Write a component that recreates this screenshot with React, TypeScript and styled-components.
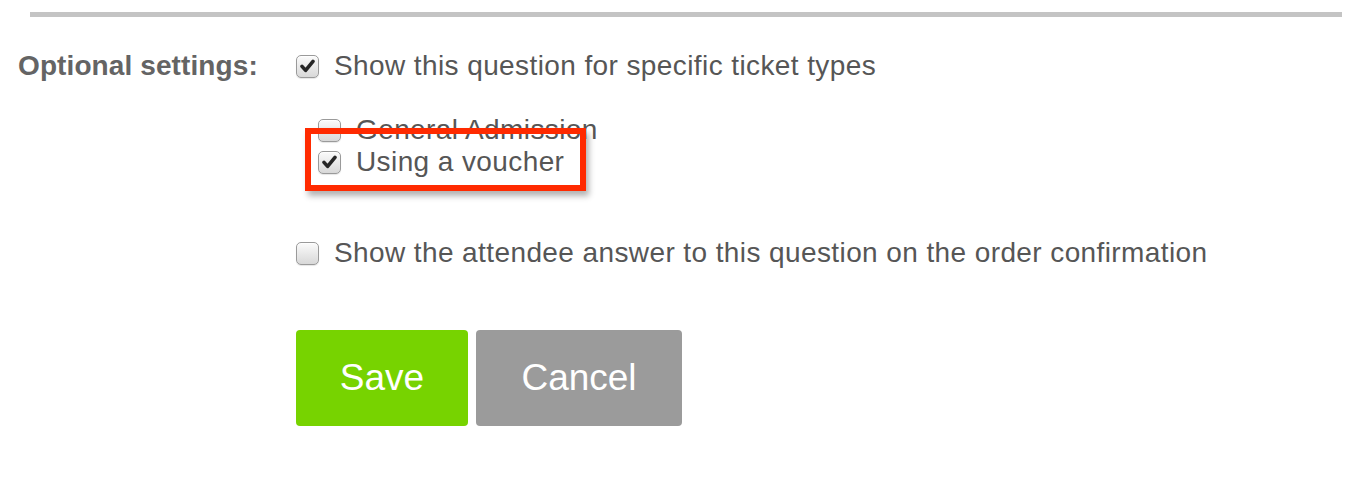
import React from 'react';
import styled, { createGlobalStyle } from 'styled-components';

const GlobalStyle = createGlobalStyle`
  html, body {
    margin: 0;
    padding: 0;
    background: #ffffff;
  }
  body {
    font-family: 'Liberation Sans', Arial, sans-serif;
  }
`;

const Page = styled.div`
  width: 1360px;
  height: 488px;
  padding-top: 12px;
  box-sizing: border-box;
`;

const Rule = styled.div`
  margin-left: 30px;
  width: 1312px;
  height: 5px;
  background: #c4c4c4;
`;

const FormRow = styled.div`
  display: flex;
  margin-top: 33px;
`;

const Label = styled.div`
  width: 278px;
  padding-left: 18px;
  font-size: 28px;
  line-height: 32px;
  font-weight: bold;
  letter-spacing: 0.1px;
  color: #646464;
`;

const Options = styled.div`
  display: flex;
  flex-direction: column;
`;

const Option = styled.label<{ $indent?: boolean }>`
  position: relative;
  display: flex;
  align-items: center;
  height: 32px;
  margin-left: ${p => (p.$indent ? '22px' : '0')};
  font-size: 28px;
  letter-spacing: 0.4px;
  color: #565656;
`;

const SubList = styled.div`
  display: flex;
  flex-direction: column;
  margin: 32px 0 59px;
`;

const Box = styled.span`
  display: inline-flex;
  align-items: center;
  justify-content: center;
  flex-shrink: 0;
  width: 23px;
  height: 23px;
  box-sizing: border-box;
  margin-right: 15px;
  border: 1px solid #9a9a9a;
  border-radius: 5px;
  background: linear-gradient(#fbfbfb, #d8d8d8);
  box-shadow: inset 0 1px 1px rgba(255, 255, 255, 0.9), 0 1px 1px rgba(0, 0, 0, 0.1);
`;

const Highlight = styled.span`
  position: absolute;
  left: -13px;
  top: -18px;
  width: 281px;
  height: 63px;
  box-sizing: border-box;
  border: 6px solid #ff2a00;
  box-shadow: 3px 5px 6px rgba(0, 0, 0, 0.3);
  pointer-events: none;
`;

const Buttons = styled.div`
  display: flex;
  gap: 8px;
  margin-top: 61px;
`;

const Button = styled.button<{ $tone: 'save' | 'cancel'; $width: number }>`
  width: ${p => p.$width}px;
  height: 96px;
  border: none;
  border-radius: 4px;
  background: ${p => (p.$tone === 'save' ? '#77d300' : '#9b9b9b')};
  color: #ffffff;
  font-family: 'Liberation Sans', Arial, sans-serif;
  font-size: 37px;
  padding: 0;
  cursor: pointer;
`;

const Check = ({ checked }: { checked?: boolean }) => (
  <Box>
    {checked && (
      <svg width="15" height="14" viewBox="0 0 15 14">
        <path
          d="M2 7.4 L5.6 11.4 L13 2.4"
          fill="none"
          stroke="#262626"
          strokeWidth="3.6"
          strokeLinecap="round"
          strokeLinejoin="round"
        />
      </svg>
    )}
  </Box>
);

const App = () => (
  <Page>
    <GlobalStyle />
    <Rule />
    <FormRow>
      <Label>Optional settings:</Label>
      <Options>
        <Option>
          <Check checked />
          Show this question for specific ticket types
        </Option>
        <SubList>
          <Option $indent>
            <Check />
            General Admission
          </Option>
          <Option $indent>
            <Check checked />
            Using a voucher
            <Highlight />
          </Option>
        </SubList>
        <Option>
          <Check />
          Show the attendee answer to this question on the order confirmation
        </Option>
        <Buttons>
          <Button $tone="save" $width={172}>Save</Button>
          <Button $tone="cancel" $width={206}>Cancel</Button>
        </Buttons>
      </Options>
    </FormRow>
  </Page>
);

export default App;
